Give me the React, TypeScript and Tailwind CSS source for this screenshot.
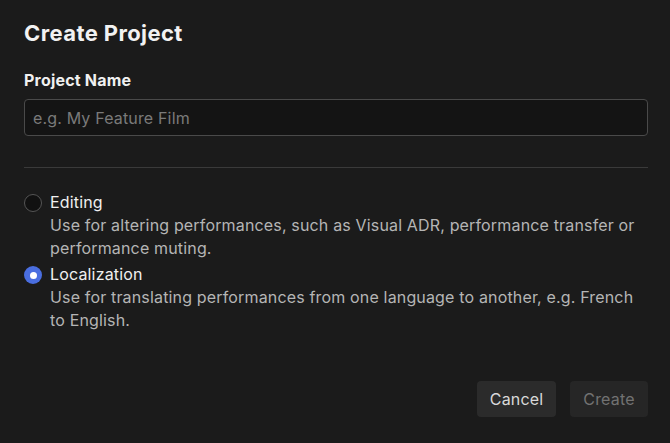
export default function App() {
  return (
    <div
      className="w-[670px] h-[443px] bg-[#1b1b1b] text-[#e6e6e6] pl-6 pr-[22px] pt-[18px] flex flex-col tracking-[0.16px]"
      style={{ fontFamily: "Inter, 'Noto Sans', sans-serif" }}
    >
      <h1 className="text-[22px] font-bold leading-[30px] text-[#f2f2f2] tracking-[0.4px]">Create Project</h1>
      <label className="mt-[20px] text-[16px] font-bold leading-[24px] text-[#f0f0f0] tracking-[0.2px]">Project Name</label>
      <div className="mt-[7px] h-[37px] rounded-[4px] border border-[#4a4a4a] bg-[#141414] flex items-center px-2">
        <span className="text-[16px] text-[#7a7a7a]">e.g. My Feature Film</span>
      </div>
      <div className="mt-[31px] h-px bg-[#3a3a3a]" />
      <div className="mt-[23px] flex flex-col gap-[3px]">
        <div className="flex gap-[8px]">
          <div className="mt-[3px] w-[18px] h-[18px] rounded-full border border-[#555] bg-[#111] shrink-0" />
          <div className="flex flex-col">
            <div className="text-[16px] leading-[23px] text-[#f0f0f0]">Editing</div>
            <div className="text-[16px] leading-[23px] text-[#b5b5b5]">
              Use for altering performances, such as Visual ADR, performance transfer or performance muting.
            </div>
          </div>
        </div>
        <div className="flex gap-[8px]">
          <div className="mt-[3px] w-[18px] h-[18px] rounded-full bg-[#4a6ee0] shrink-0 flex items-center justify-center">
            <div className="w-[7px] h-[7px] rounded-full bg-white" />
          </div>
          <div className="flex flex-col">
            <div className="text-[16px] leading-[23px] text-[#f0f0f0]">Localization</div>
            <div className="text-[16px] leading-[23px] text-[#b5b5b5]">
              Use for translating performances from one language to another, e.g. French to English.
            </div>
          </div>
        </div>
      </div>
      <div className="mt-auto mb-[26px] flex justify-end gap-[14px]">
        <button className="h-[36px] w-[79px] rounded-[4px] bg-[#2b2b2b] text-[16px] text-[#d9d9d9]">Cancel</button>
        <button className="h-[36px] w-[78px] rounded-[4px] bg-[#262626] text-[16px] text-[#727272]">Create</button>
      </div>
    </div>
  );
}
